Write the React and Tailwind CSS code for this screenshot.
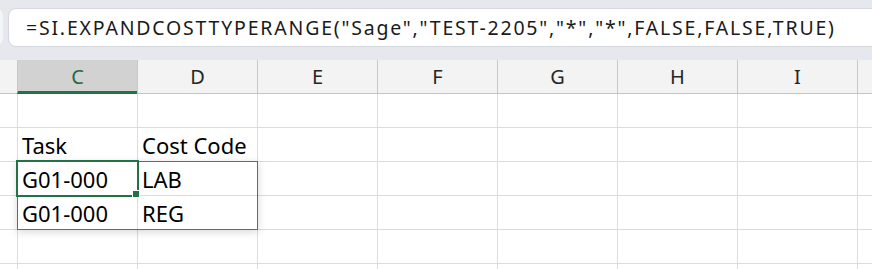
const COLS = ['C', 'D', 'E', 'F', 'G', 'H', 'I', '']

const ROWS = [
  [],
  ['Task', 'Cost Code'],
  ['G01-000', 'LAB'],
  ['G01-000', 'REG'],
  [],
  [],
]

const FORMULA = '=SI.EXPANDCOSTTYPERANGE("Sage","TEST-2205","*","*",FALSE,FALSE,TRUE)'

export default function App() {
  return (
    <div
      className="relative h-[269px] w-[872px] overflow-hidden bg-white text-black"
      style={{ fontFamily: '"Noto Sans", "Open Sans", sans-serif' }}
    >
      {/* FORMULA BAR */}
      <div className="flex h-[60px] items-start bg-[#e6e8ee] pt-[8px]">
        <div className="-ml-[20px] mr-[5px] h-[38px] w-[23px] shrink-0 rounded-lg bg-[#f4f5f8]" />
        <div className="-mr-[20px] flex h-[39px] flex-1 items-center whitespace-nowrap rounded-lg border border-[#d4d7dd] bg-white pl-[17px] text-[19.5px] tracking-[1.8px] text-[#1a1a1a]">
          {FORMULA}
        </div>
      </div>

      {/* COLUMN HEADERS */}
      <div className="flex h-[34px] bg-[#f3f3f3]">
        <div className="h-[34px] w-[17px] shrink-0 border-b border-[#c4c4c4]" />
        {COLS.map((c, j) => (
          <div
            key={j}
            className={`flex h-[34px] w-[120px] shrink-0 items-center justify-center border-l border-l-[#c8c8c8] text-[20px] ${
              c === 'C'
                ? 'border-b-[3px] border-b-[#217346] bg-[#d2d2d2] pt-[3px] text-[#1e6b41]'
                : 'border-b border-b-[#c4c4c4] text-[#262626]'
            }`}
          >
            {c}
          </div>
        ))}
      </div>

      {/* GRID */}
      {ROWS.map((row, i) => (
        <div key={i} className="flex h-[34px]">
          <div className="h-[34px] w-[17px] shrink-0 border-b border-[#dcdcdc]" />
          {COLS.map((c, j) => (
            <div
              key={j}
              className="h-[34px] w-[120px] shrink-0 overflow-visible whitespace-nowrap border-b border-l border-[#dcdcdc] pl-[4px] text-[22px] leading-[34px]"
            >
              {row[j] || ''}
            </div>
          ))}
        </div>
      ))}

      {/* SPILL RANGE + ACTIVE CELL */}
      <div className="absolute left-[17px] top-[161px] h-[69px] w-[241px] border border-[#3f6cbf] shadow-[0_2px_8px_rgba(0,0,0,0.16)]" />
      <div className="absolute left-[16px] top-[160px] h-[37px] w-[123px] border-2 border-[#217346]" />
      <div className="absolute left-[132px] top-[190px] h-[8px] w-[8px] border border-white bg-[#217346]" />
    </div>
  )
}
